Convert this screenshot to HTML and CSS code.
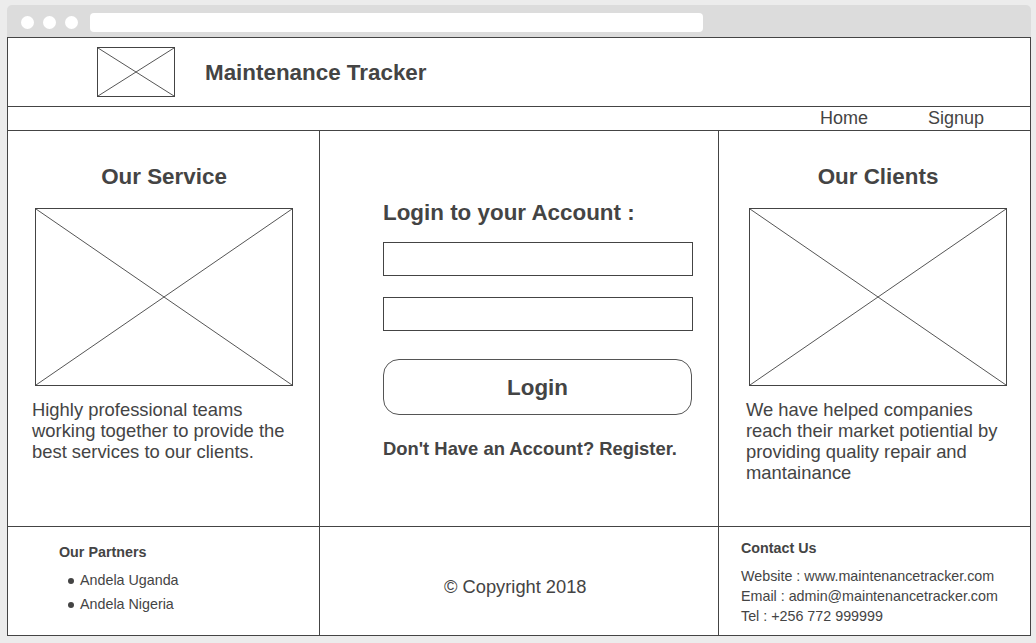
FILE: index.html
```html
<!DOCTYPE html>
<html lang="en">
<head>
    <meta charset="UTF-8">
    <meta name="viewport" content="width=device-width, initial-scale=1.0">
    <title>Maintenance Tracker - Login</title>
    <link rel="stylesheet" href="styles.css">
</head>
<body>
    <div class="browser">
        <div class="browser-bar">
            <span class="dot"></span>
            <span class="dot"></span>
            <span class="dot"></span>
            <div class="address"></div>
        </div>

        <div class="page">
            <!-- header -->
            <header class="site-header">
                <div class="placeholder logo">
                    <svg viewBox="0 0 100 100" preserveAspectRatio="none">
                        <line x1="0" y1="0" x2="100" y2="100"/>
                        <line x1="100" y1="0" x2="0" y2="100"/>
                    </svg>
                </div>
                <h1 class="site-title">Maintenance Tracker</h1>
            </header>

            <nav class="site-nav">
                <a href="#">Home</a>
                <a href="#">Signup</a>
            </nav>

            <!-- main content -->
            <main class="columns main">
                <section class="side side-left">
                    <h2 class="side-title">Our Service</h2>
                    <div class="placeholder side-image">
                        <svg viewBox="0 0 100 100" preserveAspectRatio="none">
                            <line x1="0" y1="0" x2="100" y2="100"/>
                            <line x1="100" y1="0" x2="0" y2="100"/>
                        </svg>
                    </div>
                    <p class="side-text">Highly professional teams working together to provide the best services to our clients.</p>
                </section>

                <section class="login">
                    <h2 class="login-title">Login to your Account :</h2>
                    <form class="login-form" onsubmit="return false">
                        <input type="text" class="field">
                        <input type="password" class="field field-second">
                        <button type="submit" class="login-btn">Login</button>
                    </form>
                    <p class="register">Don't Have an Account? Register.</p>
                </section>

                <section class="side side-right">
                    <h2 class="side-title">Our Clients</h2>
                    <div class="placeholder side-image">
                        <svg viewBox="0 0 100 100" preserveAspectRatio="none">
                            <line x1="0" y1="0" x2="100" y2="100"/>
                            <line x1="100" y1="0" x2="0" y2="100"/>
                        </svg>
                    </div>
                    <p class="side-text">We have helped companies reach their market potiential by providing quality repair and mantainance</p>
                </section>
            </main>

            <!-- footer -->
            <footer class="columns footer">
                <div class="partners">
                    <h4 class="footer-title">Our Partners</h4>
                    <ul class="partner-list">
                        <li>Andela Uganda</li>
                        <li>Andela Nigeria</li>
                    </ul>
                </div>
                <div class="copyright">&copy; Copyright 2018</div>
                <div class="contact">
                    <h4 class="footer-title">Contact Us</h4>
                    <p class="contact-lines">
                        Website : www.maintenancetracker.com<br>
                        Email : admin@maintenancetracker.com<br>
                        Tel : +256 772 999999
                    </p>
                </div>
            </footer>
        </div>
    </div>
</body>
</html>
```

FILE: styles.css
```css
/* base */
:root {
    --ink: #444444;
    --line: #444444;
    --chrome: #dcdcdc;
}

body {
    margin: 0;
    background: #ececec;
    color: var(--ink);
    font-family: "Liberation Sans", Arial, sans-serif;
}

/* browser frame */
.browser {
    width: 1024px;
    margin: 5px 0 0 7px;
}

.browser-bar {
    height: 32px;
    box-sizing: border-box;
    padding: 2px 0 0 14px;
    background: var(--chrome);
    border-radius: 5px 5px 0 0;
    display: flex;
    align-items: center;
    gap: 9px;
}

.dot {
    width: 13px;
    height: 13px;
    border-radius: 50%;
    background: #fff;
}

.address {
    width: 613px;
    height: 19px;
    margin-left: 3px;
    background: #fff;
    border-radius: 4px;
}

.page {
    background: #fff;
    border: 1px solid var(--line);
}

/* x-box placeholders */
.placeholder {
    box-sizing: border-box;
    border: 1px solid var(--line);
}

.placeholder svg {
    display: block;
    width: 100%;
    height: 100%;
}

.placeholder line {
    stroke: #555;
    stroke-width: 1;
    vector-effect: non-scaling-stroke;
}

/* header */
.site-header {
    height: 68px;
    display: flex;
    align-items: center;
    gap: 30px;
    padding-left: 89px;
    border-bottom: 1px solid var(--line);
}

.logo {
    width: 78px;
    height: 50px;
}

.site-title {
    margin: 2px 0 0;
    font-size: 22.4px;
}

.site-nav {
    height: 23px;
    line-height: 23px;
    display: flex;
    justify-content: flex-end;
    gap: 60px;
    padding-right: 46px;
    font-size: 18px;
    border-bottom: 1px solid var(--line);
}

.site-nav a {
    color: var(--ink);
    text-decoration: none;
}

/* three columns */
.columns {
    display: grid;
    grid-template-columns: 312px 399px 1fr;
}

.columns > * {
    box-sizing: border-box;
}

.columns > *:not(:last-child) {
    border-right: 1px solid var(--line);
}

.main {
    height: 395px;
    border-bottom: 1px solid var(--line);
}

.side {
    padding: 33px 0 0 24px;
}

.side-right {
    padding-left: 27px;
}

.side-title {
    width: 258px;
    margin: 0 0 0 3px;
    font-size: 22.4px;
    line-height: 26px;
    text-align: center;
}

.side-image {
    width: 258px;
    height: 178px;
    margin: 18px 0 0 3px;
}

.side-text {
    width: 266px;
    margin: 13px 0 0;
    font-size: 18.4px;
    line-height: 21px;
}

/* login form */
.login {
    padding: 69px 0 0 63px;
}

.login-title {
    margin: 0;
    font-size: 22.4px;
    line-height: 26px;
}

.login-form {
    margin: 0;
}

.field {
    display: block;
    box-sizing: border-box;
    width: 310px;
    height: 34px;
    margin-top: 16px;
    padding: 0 8px;
    border: 1px solid var(--line);
    border-radius: 0;
    font: 16px "Liberation Sans", Arial, sans-serif;
}

.field-second {
    margin-top: 21px;
}

.login-btn {
    display: block;
    box-sizing: border-box;
    width: 309px;
    height: 56px;
    margin-top: 28px;
    padding-top: 2px;
    background: #fff;
    border: 1px solid #555;
    border-radius: 16px;
    color: var(--ink);
    font: bold 22.4px "Liberation Sans", Arial, sans-serif;
    cursor: pointer;
}

.register {
    margin: 23px 0 0;
    font-size: 18.4px;
    line-height: 21px;
    font-weight: bold;
}

/* footer */
.footer {
    height: 108px;
    font-size: 14.3px;
}

.footer-title {
    margin: 0;
    font-size: 14.3px;
    line-height: 16px;
}

.partners {
    padding: 17px 0 0 51px;
}

.partner-list {
    list-style: none;
    margin: 8px 0 0 9px;
    padding: 0;
}

.partner-list li {
    line-height: 24px;
}

.partner-list li::before {
    content: "";
    display: inline-block;
    width: 6px;
    height: 6px;
    margin-right: 6px;
    border-radius: 50%;
    background: var(--ink);
    vertical-align: middle;
}

.copyright {
    padding: 49px 0 0 124px;
    font-size: 18.3px;
    line-height: 21px;
}

.contact {
    padding: 13px 0 0 22px;
}

.contact-lines {
    margin: 10px 0 0;
    line-height: 20px;
}
```
